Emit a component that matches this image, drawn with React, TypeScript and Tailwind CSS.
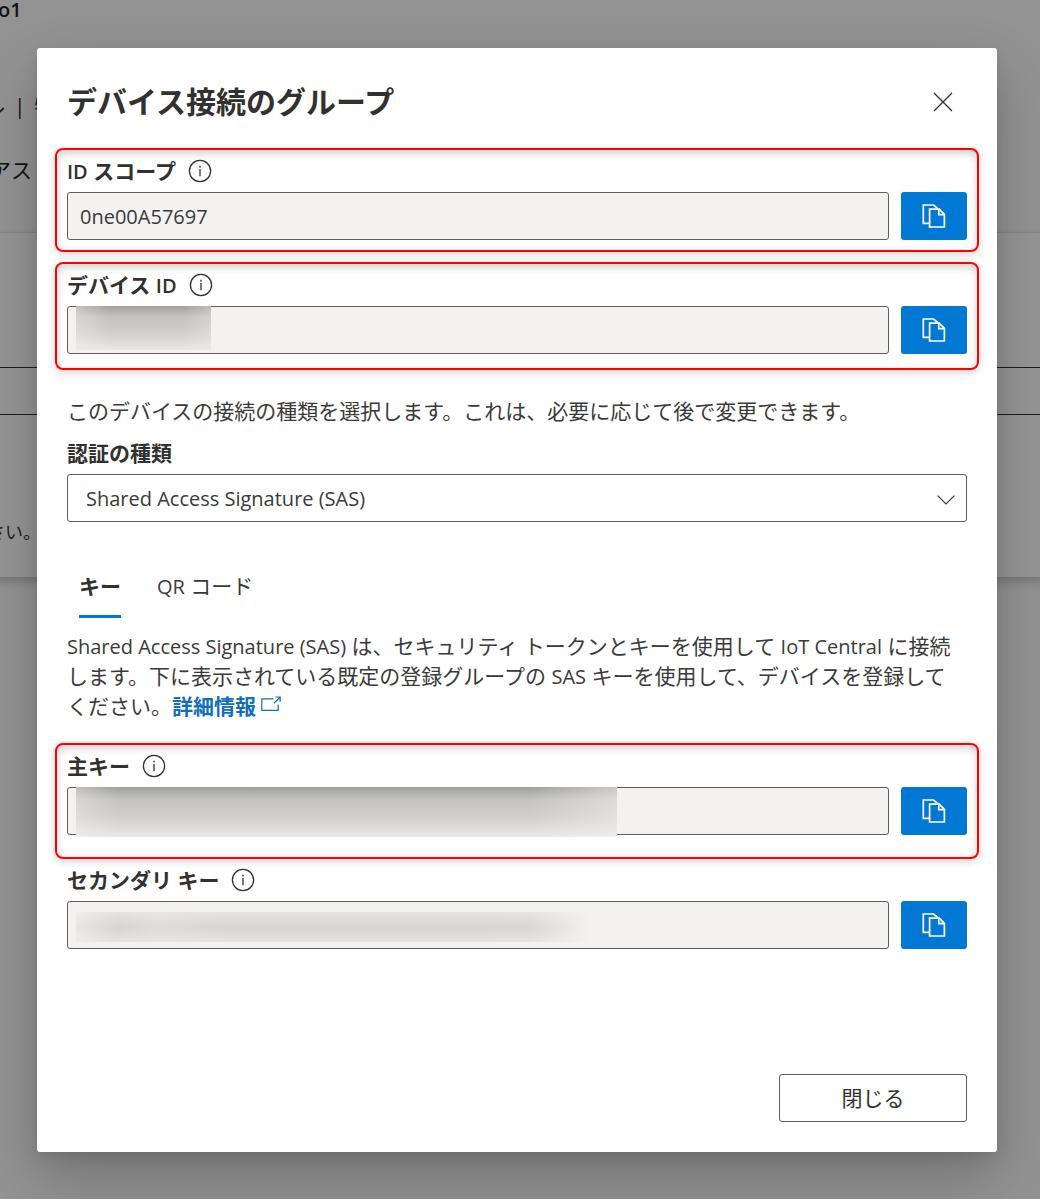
import { useState } from 'react'
import type { ReactNode } from 'react'

const FOCUS = 'focus-visible:outline-2 focus-visible:outline-[#0078d4]'

function CopyIcon() {
  return (
    <svg width="24" height="24" viewBox="0 0 24 24" fill="none" stroke="currentColor" strokeWidth="1.7" aria-hidden="true">
      <path d="M7.5 19.4H1.3V1h10.2l2.6 2.2 2 2" />
      <path d="M7.6 5.2h9.6l5.2 5.2v12.6H7.6z" />
      <path d="M16.8 5.2v5.4h5.6" />
    </svg>
  )
}

function InfoIcon() {
  return (
    <svg width="24" height="24" viewBox="0 0 24 24" fill="none" stroke="#323130" aria-hidden="true">
      <circle cx="12" cy="12" r="10.6" strokeWidth="1.3" />
      <path d="M12 10v7.2" strokeWidth="1.3" />
      <path d="M12 6.8v1.6" strokeWidth="1.5" />
    </svg>
  )
}

function ExternalIcon() {
  return (
    <svg width="20" height="16" viewBox="0 0 20 16" fill="none" stroke="currentColor" strokeWidth="1.2" className="mb-[2px] ml-[5px] inline-block align-baseline" aria-hidden="true">
      <path d="M12.5 2.8H.8v11.6h16.4V8.4" />
      <path d="M12.8 7.2l6.2-6M14.4 1h4.8v4.8" />
    </svg>
  )
}

interface KeyFieldProps {
  id: string
  label: ReactNode
  name: string
  value?: string
  mask?: string
  frame?: string
}

function KeyField({ id, label, name, value = '', mask, frame }: KeyFieldProps) {
  const frameClass = frame
    ? `border-2 border-[#ff0000] shadow-[0_2px_8px_rgba(0,0,0,0.2),inset_0_3px_8px_rgba(0,0,0,0.2)] ${frame}`
    : 'border-x-2 border-transparent'

  return (
    <div className={`rounded-lg px-[10px] pt-[6px] ${frameClass}`}>
      <div className="mb-[6px] flex h-[30px] items-center gap-3">
        <label htmlFor={id} className="font-bold">{label}</label>
        <button type="button" aria-label={`${name}の情報`} className={FOCUS}>
          <InfoIcon />
        </button>
      </div>
      <div className="flex gap-3">
        <div className="relative min-w-0 flex-1">
          <input
            id={id}
            readOnly
            defaultValue={value}
            className="block h-12 w-full rounded-[3px] border border-[#605e5c] bg-[#f3f2f1] px-3 text-xl text-[#3b3a39] outline-none"
          />
          {mask && <div className={`pointer-events-none absolute left-[9px] ${mask}`} />}
        </div>
        <button
          type="button"
          aria-label={`${name}をコピー`}
          className={`flex h-12 w-[66px] items-center justify-center rounded-[3px] bg-[#0078d4] text-white ${FOCUS}`}
        >
          <CopyIcon />
        </button>
      </div>
    </div>
  )
}

// Page that stays behind the dialog
function DevicePage() {
  return (
    <div className="text-[21px] leading-[30px] text-[#201f1e]" aria-hidden="true">
      <div className="-ml-[2px] -mt-[5px] text-xl leading-[30px] font-semibold">o1</div>
      <div className="-ml-4 mt-[66px] flex gap-[9px]">
        <span>ル</span>
        <span>|</span>
        <span>特</span>
      </div>
      <div className="-ml-[10px] mt-[34px]">アス</div>
      <div className="-mx-4 mt-[47px] h-[345px] border-t border-[#e1dfdd] bg-[#faf9f8] pt-[134px] shadow-[0_5px_10px_rgba(0,0,0,0.2)]">
        <div className="h-12 border border-[#323130]" />
        <div className="mt-[103px] ml-[3px] text-lg text-[#3b3a39]">さい。</div>
      </div>
    </div>
  )
}

export default function App() {
  const [tab, setTab] = useState('key')

  return (
    <div className="relative min-h-screen overflow-hidden bg-[#f6f6f6] font-['Open_Sans','Noto_Sans_CJK_JP',sans-serif]">
      <DevicePage />

      <div className="absolute inset-0 flex bg-black/40 pt-12 pr-[43px] pb-[47px] pl-[37px]">
        <div
          role="dialog"
          aria-modal="true"
          aria-labelledby="dialog-title"
          className="flex min-w-0 flex-1 flex-col rounded-[3px] bg-white px-[18px] pt-[30px] pb-[30px] text-[21px] leading-[30px] text-[#323130] shadow-[0_26px_58px_rgba(0,0,0,0.22),0_5px_14px_rgba(0,0,0,0.1)]"
        >
          <header className="flex h-12 items-center justify-between px-3">
            <h1 id="dialog-title" className="text-[30px] font-bold">デバイス接続のグループ</h1>
            <button type="button" aria-label="閉じる" className={`mr-3 flex h-6 w-6 items-center justify-center ${FOCUS}`}>
              <svg width="20" height="20" viewBox="0 0 20 20" stroke="currentColor" strokeWidth="1.3" aria-hidden="true">
                <path d="M1 1l18 18M19 1L1 19" />
              </svg>
            </button>
          </header>

          <div className="mt-[22px] flex flex-col gap-[10px]">
            <KeyField
              id="scope"
              name="ID スコープ"
              label={<><span className="text-xl font-semibold">ID</span> スコープ</>}
              value="0ne00A57697"
              frame="pb-[10px]"
            />
            <KeyField
              id="device"
              name="デバイス ID"
              label={<>デバイス <span className="text-xl font-semibold">ID</span></>}
              mask="top-0 h-11 w-[135px] bg-[linear-gradient(90deg,rgba(243,242,241,0.4),rgba(243,242,241,0)_25%,rgba(243,242,241,0)_80%,rgba(243,242,241,0.3)),linear-gradient(#a3a2a0,#c4c3c1_25%,#d0cfcd_60%,#e9e8e7)]"
              frame="pb-[14px]"
            />
          </div>

          <div className="mt-[26px] px-3 text-[#3b3a39]">
            <p>このデバイスの接続の種類を選択します。これは、必要に応じて後で変更できます。</p>
            <label htmlFor="auth" className="mt-3 block font-bold text-[#323130]">認証の種類</label>
            <div className="relative mt-[6px]">
              <select
                id="auth"
                className={`block h-12 w-full appearance-none rounded-[3px] border border-[#605e5c] bg-white px-[18px] pt-[2px] text-xl ${FOCUS}`}
              >
                <option>Shared Access Signature (SAS)</option>
              </select>
              <svg width="18" height="10" viewBox="0 0 18 10" fill="none" stroke="currentColor" strokeWidth="1.2" className="pointer-events-none absolute top-[21px] right-3" aria-hidden="true">
                <path d="M.6.6L9 9 17.4.6" />
              </svg>
            </div>

            <div role="tablist" className="mt-[49px] flex gap-9 px-3">
              <button
                type="button"
                role="tab"
                aria-selected={tab === 'key'}
                onClick={() => setTab('key')}
                className={`border-b-3 pb-[14px] ${tab === 'key' ? 'border-[#0078d4] font-bold text-[#323130]' : 'border-transparent'}`}
              >
                キー
              </button>
              <button
                type="button"
                role="tab"
                aria-selected={tab === 'qr'}
                onClick={() => setTab('qr')}
                className={`border-b-3 pb-[14px] ${tab === 'qr' ? 'border-[#0078d4] font-bold text-[#323130]' : 'border-transparent'}`}
              >
                <span className="text-xl">QR</span> コード
              </button>
            </div>

            <p className="mt-[13px] pr-2">
              <span className="text-xl leading-none">Shared Access Signature (SAS)</span> は、セキュリティ トークンとキーを使用して <span className="text-xl leading-none">IoT Central</span> に接続します。下に表示されている既定の登録グループの <span className="text-xl leading-none">SAS</span> キーを使用して、デバイスを登録してください。
              <a href="#sas" className="font-bold text-[#106ebe]">
                詳細情報
                <ExternalIcon />
              </a>
            </p>
          </div>

          <div className="mt-[22px] flex flex-col">
            <KeyField
              id="primary"
              name="主キー"
              label="主キー"
              mask="top-0 h-[50px] w-[541px] bg-[linear-gradient(90deg,rgba(243,242,241,0.4),rgba(243,242,241,0)_8%,rgba(243,242,241,0)_84%,rgba(243,242,241,0.5)),linear-gradient(#a09f9d,#c4c3c1_25%,#d0cfcd_60%,#e9e8e7)]"
              frame="pb-[22px]"
            />
            <KeyField
              id="secondary"
              name="セカンダリ キー"
              label="セカンダリ キー"
              mask="top-[11px] h-[30px] w-[515px] bg-[linear-gradient(rgba(243,242,241,0.5),rgba(243,242,241,0)_50%,rgba(243,242,241,0.5)),linear-gradient(90deg,#e8e7e6,#d6d5d3_8%,#dddcda_16%,#d6d5d3_30%,#d6d5d3_75%,#d8d7d5_88%,#f3f2f1)]"
            />
          </div>

          <footer className="mt-auto flex justify-end px-3">
            <button type="button" className={`h-12 w-[188px] rounded-[3px] border border-[#605e5c] bg-white ${FOCUS}`}>
              閉じる
            </button>
          </footer>
        </div>
      </div>
    </div>
  )
}
